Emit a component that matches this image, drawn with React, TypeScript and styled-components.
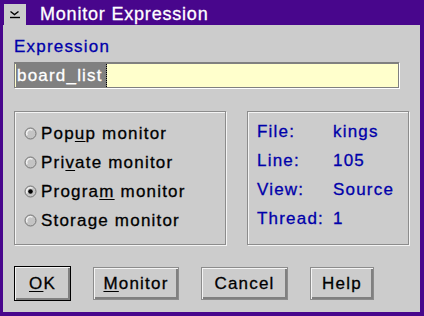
import React from 'react';
import styled, { createGlobalStyle } from 'styled-components';

const PURPLE = '#48068c';
const FACE = '#cccccc';
const INK_BLUE = '#0000aa';

const GlobalStyles = createGlobalStyle`
    body {
        margin      : 0;
        background  : ${FACE};
        font-family : "Liberation Sans", Arial, sans-serif;
    }
`

const radios = [
    { pre: 'Pop', key: 'u', post: 'p monitor', checked: false },
    { pre: 'Pri', key: 'v', post: 'ate monitor', checked: false },
    { pre: 'Progra', key: 'm', post: ' monitor', checked: true },
    { pre: 'Storage monitor', key: '', post: '', checked: false },
]

const info = [
    ['File:', 'kings'],
    ['Line:', '105'],
    ['View:', 'Source'],
    ['Thread:', '1'],
]

const SysMenuIcon: React.FC = () => (
    <svg width="22" height="21" viewBox="0 0 22 21">
        <polyline points="6.5,7.5 10.5,10.5 14.5,7.5" fill="none" stroke="#000" strokeWidth="1.4" />
        <line x1="6" y1="13.5" x2="16" y2="13.5" stroke="#000" strokeWidth="1.4" />
    </svg>
)

const RadioDot: React.FC<{ checked: boolean }> = ({ checked }) => (
    <svg width="13" height="13" viewBox="0 0 13 13">
        <circle cx="6.5" cy="6.5" r="5.5" fill="#c4c4c4" stroke="#767676" strokeWidth="1" />
        <path d="M3.2 8.4 A3.8 3.8 0 0 1 8.4 3.2" fill="none" stroke="#f4f4f4" strokeWidth="1.3" />
        {checked && <circle cx="6.5" cy="6.5" r="2.3" fill="#000" />}
    </svg>
)

const App: React.FC = () => {
    return (
        <Window>
            <GlobalStyles />
            <TitleBar>
                <SysButton>
                    <SysMenuIcon />
                </SysButton>
                <Title>Monitor Expression</Title>
            </TitleBar>
            <Body>
                <FieldLabel>Expression</FieldLabel>
                <Entry>
                    <Selected>board_list</Selected>
                </Entry>
                <Groups>
                    <GroupBox width={212}>
                        {radios.map((r, i) => (
                            <RadioRow key={i}>
                                <RadioDot checked={r.checked} />
                                <span>
                                    {r.pre}
                                    {r.key && <u>{r.key}</u>}
                                    {r.post}
                                </span>
                            </RadioRow>
                        ))}
                    </GroupBox>
                    <GroupBox width={162}>
                        <InfoGrid>
                            {info.map(([k, v]) => (
                                <React.Fragment key={k}>
                                    <span>{k}</span>
                                    <span>{v}</span>
                                </React.Fragment>
                            ))}
                        </InfoGrid>
                    </GroupBox>
                </Groups>
                <ButtonRow>
                    <PushButton width={57} isDefault><u>O</u>K</PushButton>
                    <PushButton width={86}><u>M</u>onitor</PushButton>
                    <PushButton width={87}>Cancel</PushButton>
                    <PushButton width={64}>Help</PushButton>
                </ButtonRow>
            </Body>
        </Window>
    );
}

export default App;

const Window = styled.div`
    width          : 424px;
    height         : 316px;
    box-sizing     : border-box;
    border-left    : 3px solid ${PURPLE};
    border-right   : 4px solid ${PURPLE};
    border-bottom  : 4px solid ${PURPLE};
    background     : ${FACE};
    display        : flex;
    flex-direction : column;
`

const TitleBar = styled.div`
    height      : 25px;
    box-sizing  : border-box;
    padding     : 4px 0 0 1px;
    background  : ${PURPLE};
    display     : flex;
    align-items : flex-start;
`

const SysButton = styled.div`
    width      : 22px;
    height     : 21px;
    background : ${FACE};
    display    : flex;
`

const Title = styled.div`
    margin-left        : 14px;
    color              : #fff;
    font-size          : 18px;
    line-height        : 21px;
    letter-spacing     : 0.8px;
    -webkit-text-stroke: 0.3px #fff;
`

const Body = styled.div`
    padding            : 12px 0 0 11px;
    display            : flex;
    flex-direction     : column;
    font-size          : 17px;
    letter-spacing     : 1.2px;
    -webkit-text-stroke: 0.3px currentColor;
`

const FieldLabel = styled.div`
    color       : ${INK_BLUE};
    line-height : 20px;
`

const Entry = styled.div`
    margin-top  : 5px;
    width       : 385px;
    height      : 26px;
    box-sizing  : border-box;
    border      : 1px solid #808080;
    border-top  : 2px solid #808080;
    box-shadow  : 1px 1px 0 #fff;
    background  : #ffffcc;
    padding     : 0 1px;
    display     : flex;
`

const Selected = styled.span`
    background   : #808080;
    color        : #fff;
    line-height  : 23px;
    padding      : 0 3px 0 1px;
    border-right : 1px dotted #000;
`

const Groups = styled.div`
    margin-top : 23px;
    display    : flex;
    gap        : 21px;
`

const GroupBox = styled.div<{ width: number }>`
    width          : ${p => p.width}px;
    height         : 134px;
    box-sizing     : border-box;
    border         : 1px solid #8c8c8c;
    box-shadow     : inset 1px 1px 0 #f4f4f4, 1px 1px 0 #f4f4f4;
    padding        : 7px 0 0 9px;
    display        : flex;
    flex-direction : column;
`

const RadioRow = styled.div`
    height      : 29px;
    display     : flex;
    align-items : center;
    gap         : 4px;
    color       : #000;

    u {
        text-underline-offset : 2px;
    }
`

const InfoGrid = styled.div`
    display               : grid;
    grid-template-columns : 76px auto;
    grid-auto-rows        : 29px;
    align-items           : center;
    color                 : ${INK_BLUE};
    margin-top            : -2px;
`

const ButtonRow = styled.div`
    margin-top  : 21px;
    height      : 35px;
    display     : flex;
    align-items : center;
    gap         : 22px;
`

const PushButton = styled.div<{ width: number; isDefault?: boolean }>`
    width           : ${p => p.width}px;
    height          : ${p => (p.isDefault ? 35 : 33)}px;
    box-sizing      : border-box;
    border          : 1px solid ${p => (p.isDefault ? '#000' : '#8c8c8c')};
    box-shadow      : inset 1px 1px 0 #f4f4f4, inset -2px -2px 0 #808080;
    background      : ${FACE};
    display         : flex;
    align-items     : center;
    justify-content : center;
    color           : #000;

    u {
        text-underline-offset : 2px;
    }
`
